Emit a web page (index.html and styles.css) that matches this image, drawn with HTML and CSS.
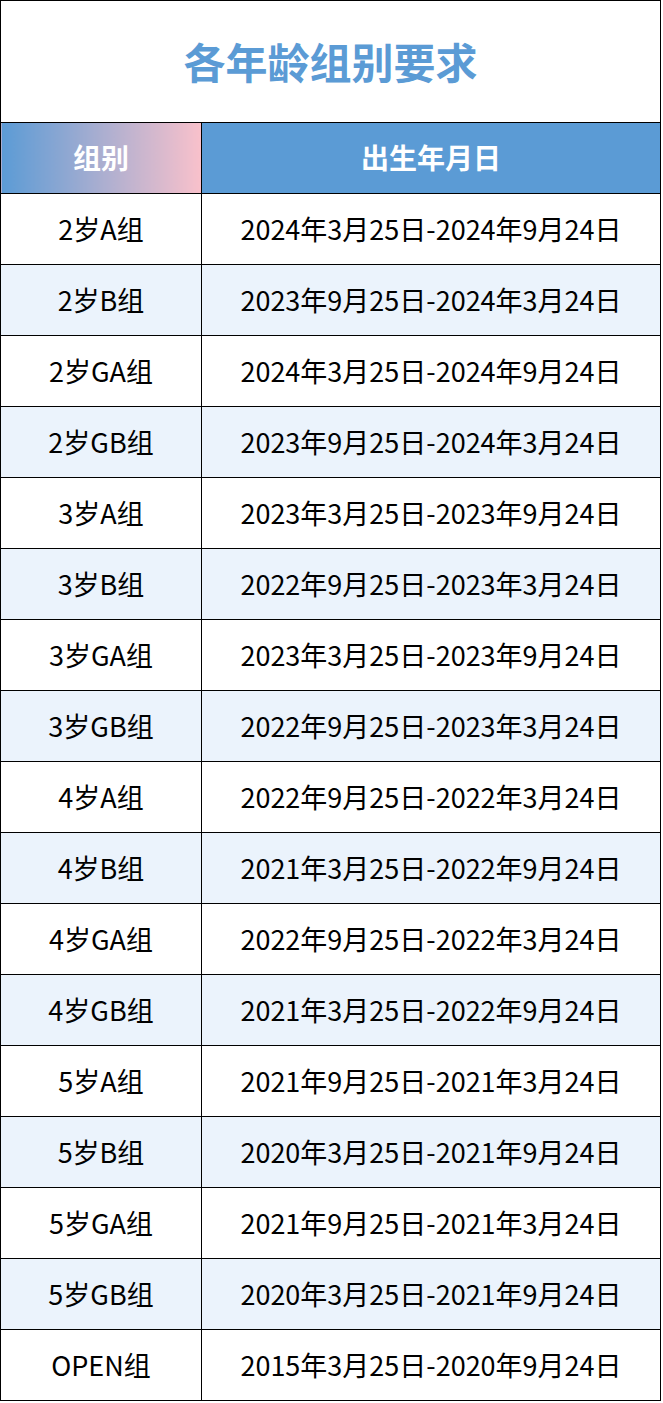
FILE: index.html
```html
<!DOCTYPE html>
<html lang="zh-CN">
<head>
<meta charset="utf-8">
<title>各年龄组别要求</title>
<link rel="stylesheet" href="styles.css">
</head>
<body>
<table class="grid">
  <colgroup><col class="col-group"><col class="col-date"></colgroup>
  <tr class="title-row"><td class="title" colspan="2">各年龄组别要求</td></tr>
  <tr class="head-row"><th class="head head-group">组别</th><th class="head head-date">出生年月日</th></tr>
  <tr class="row"><td>2岁A组</td><td>2024年3月25日-2024年9月24日</td></tr>
  <tr class="row alt"><td>2岁B组</td><td>2023年9月25日-2024年3月24日</td></tr>
  <tr class="row"><td>2岁GA组</td><td>2024年3月25日-2024年9月24日</td></tr>
  <tr class="row alt"><td>2岁GB组</td><td>2023年9月25日-2024年3月24日</td></tr>
  <tr class="row"><td>3岁A组</td><td>2023年3月25日-2023年9月24日</td></tr>
  <tr class="row alt"><td>3岁B组</td><td>2022年9月25日-2023年3月24日</td></tr>
  <tr class="row"><td>3岁GA组</td><td>2023年3月25日-2023年9月24日</td></tr>
  <tr class="row alt"><td>3岁GB组</td><td>2022年9月25日-2023年3月24日</td></tr>
  <tr class="row"><td>4岁A组</td><td>2022年9月25日-2022年3月24日</td></tr>
  <tr class="row alt"><td>4岁B组</td><td>2021年3月25日-2022年9月24日</td></tr>
  <tr class="row"><td>4岁GA组</td><td>2022年9月25日-2022年3月24日</td></tr>
  <tr class="row alt"><td>4岁GB组</td><td>2021年3月25日-2022年9月24日</td></tr>
  <tr class="row"><td>5岁A组</td><td>2021年9月25日-2021年3月24日</td></tr>
  <tr class="row alt"><td>5岁B组</td><td>2020年3月25日-2021年9月24日</td></tr>
  <tr class="row"><td>5岁GA组</td><td>2021年9月25日-2021年3月24日</td></tr>
  <tr class="row alt"><td>5岁GB组</td><td>2020年3月25日-2021年9月24日</td></tr>
  <tr class="row"><td>OPEN组</td><td>2015年3月25日-2020年9月24日</td></tr>
</table>
</body>
</html>
```
FILE: styles.css
```css
html, body {
  margin: 0;
  padding: 0;
  background: #ffffff;
}
body {
  font-family: "Noto Sans CJK SC", "Noto Sans", sans-serif;
  color: #000;
}
.grid {
  border-collapse: collapse;
  width: 661px;
  table-layout: fixed;
}
.col-group {
  width: 201px;
}
.grid td, .grid th {
  border: 1px solid #000;
  padding: 0;
  text-align: center;
  vertical-align: middle;
  white-space: nowrap;
  line-height: 1.2;
}
.title {
  height: 121px;
  font-size: 42px;
  font-weight: 700;
  color: #5b9bd5;
}
.head {
  height: 70px;
  font-size: 28px;
  font-weight: 700;
  color: #ffffff;
}
.head-group {
  background: linear-gradient(to right, #5b9bd5, #f9c1cb);
}
.head-date {
  background: #5b9bd5;
}
.row td {
  height: 70px;
  font-size: 27px;
  background: #ffffff;
}
.row.alt td {
  background: #ebf3fc;
}
```
